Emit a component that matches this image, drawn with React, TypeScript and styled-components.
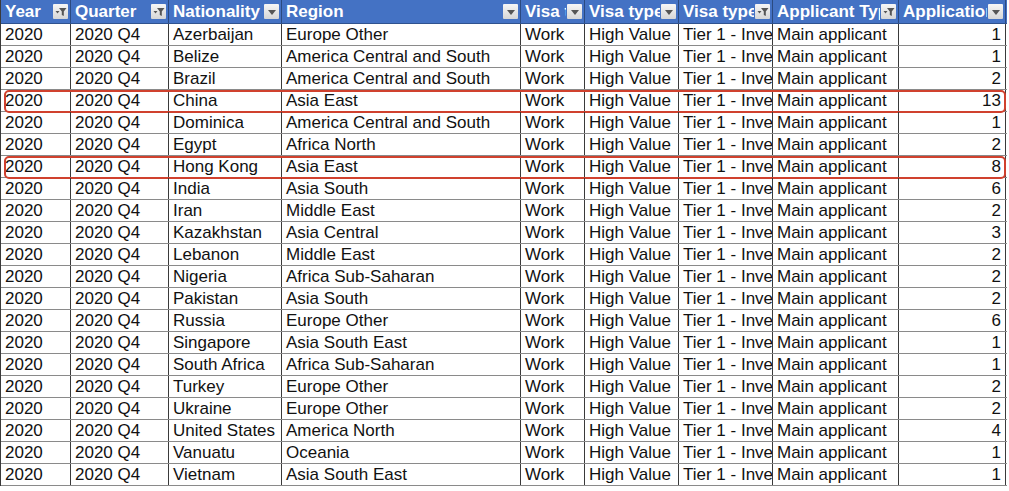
import React from "react";
import styled, { createGlobalStyle } from "styled-components";

const Global = createGlobalStyle`
  html, body { margin: 0; padding: 0; background: #ffffff; }
  body { font-family: "Liberation Sans", Arial, sans-serif; }
`;

const COLS = [70, 98, 113, 239, 64, 94, 94, 126, 107];

type Col = { label: string; icon: "filter" | "arrow"; align?: "right" };

const columns: Col[] = [
  { label: "Year", icon: "filter" },
  { label: "Quarter", icon: "filter" },
  { label: "Nationality", icon: "arrow" },
  { label: "Region", icon: "arrow" },
  { label: "Visa type", icon: "arrow" },
  { label: "Visa type", icon: "arrow" },
  { label: "Visa type", icon: "filter" },
  { label: "Applicant Type", icon: "filter" },
  { label: "Applications", icon: "arrow", align: "right" },
];

const raw: [string, string, string, number][] = [
  ["Azerbaijan", "Europe Other", "", 1],
  ["Belize", "America Central and South", "", 1],
  ["Brazil", "America Central and South", "", 2],
  ["China", "Asia East", "hl", 13],
  ["Dominica", "America Central and South", "", 1],
  ["Egypt", "Africa North", "", 2],
  ["Hong Kong", "Asia East", "hl", 8],
  ["India", "Asia South", "", 6],
  ["Iran", "Middle East", "", 2],
  ["Kazakhstan", "Asia Central", "", 3],
  ["Lebanon", "Middle East", "", 2],
  ["Nigeria", "Africa Sub-Saharan", "", 2],
  ["Pakistan", "Asia South", "", 2],
  ["Russia", "Europe Other", "", 6],
  ["Singapore", "Asia South East", "", 1],
  ["South Africa", "Africa Sub-Saharan", "", 1],
  ["Turkey", "Europe Other", "", 2],
  ["Ukraine", "Europe Other", "", 2],
  ["United States", "America North", "", 4],
  ["Vanuatu", "Oceania", "", 1],
  ["Vietnam", "Asia South East", "", 1],
];

const Sheet = styled.div`
  display: flex;
  flex-direction: column;
  width: ${COLS.reduce((a, b) => a + b, 0) + 1}px;
  border-left: 1px solid #3a3a3a;
`;

const HeaderRow = styled.div`
  display: grid;
  grid-template-columns: ${COLS.map((c) => c + "px").join(" ")};
  height: 24px;
  background: #4472c4;
  border-bottom: 1px solid #2f528f;
  box-sizing: border-box;
`;

const HeaderCell = styled.div`
  display: flex;
  align-items: center;
  gap: 1px;
  padding: 0 2px 0 4px;
  border-right: 1px solid #2b4a80;
  overflow: hidden;
  min-width: 0;
`;

const HeaderLabel = styled.span`
  flex: 1;
  min-width: 0;
  overflow: hidden;
  white-space: nowrap;
  color: #ffffff;
  font-weight: bold;
  font-size: 17px;
  line-height: 23px;
`;

const FilterBtn = styled.span`
  flex: 0 0 auto;
  width: 15px;
  height: 15px;
  display: flex;
  align-items: center;
  justify-content: center;
  background: linear-gradient(#f6f6f6, #d6d6d6);
  border-radius: 1px;
`;

const Row = styled.div<{ $hl?: boolean }>`
  position: relative;
  display: grid;
  grid-template-columns: ${COLS.map((c) => c + "px").join(" ")};
  height: 22px;
  border-bottom: 1px solid #8a8a8a;
  box-sizing: border-box;
  &::after {
    content: "";
    display: ${(p) => (p.$hl ? "block" : "none")};
    position: absolute;
    left: 3px;
    right: 1px;
    top: 0px;
    bottom: -2px;
    border: 2px solid #d0412e;
    border-radius: 5px;
    pointer-events: none;
  }
`;

const Cell = styled.div<{ $right?: boolean }>`
  padding: 0 4px;
  border-right: 1px solid #3a3a3a;
  font-size: 17px;
  line-height: 21px;
  color: #111;
  white-space: nowrap;
  overflow: hidden;
  text-overflow: clip;
  text-align: ${(p) => (p.$right ? "right" : "left")};
`;

const ArrowIcon = () => (
  <svg width="10" height="8" viewBox="0 0 10 8">
    <path d="M1 2 L9 2 L5 7 Z" fill="#555" />
  </svg>
);

const FunnelIcon = () => (
  <svg width="12" height="10" viewBox="0 0 12 10">
    <path d="M4 1 L11.5 1 L8.8 4.5 L8.8 9 L6.8 8 L6.8 4.5 Z" fill="#555" />
    <path d="M0.5 4 L4.5 4 L2.5 6.5 Z" fill="#555" />
  </svg>
);

export default function App() {
  return (
    <>
      <Global />
      <Sheet>
        <HeaderRow>
          {columns.map((c, i) => (
            <HeaderCell key={i}>
              <HeaderLabel>{c.label}</HeaderLabel>
              <FilterBtn>{c.icon === "filter" ? <FunnelIcon /> : <ArrowIcon />}</FilterBtn>
            </HeaderCell>
          ))}
        </HeaderRow>
        {raw.map(([nat, region, hl, n], i) => (
          <Row key={i} $hl={hl === "hl"}>
            <Cell>2020</Cell>
            <Cell>2020 Q4</Cell>
            <Cell>{nat}</Cell>
            <Cell>{region}</Cell>
            <Cell>Work</Cell>
            <Cell>High Value</Cell>
            <Cell>Tier 1 - Investor</Cell>
            <Cell>Main applicant</Cell>
            <Cell $right>{n}</Cell>
          </Row>
        ))}
      </Sheet>
    </>
  );
}
